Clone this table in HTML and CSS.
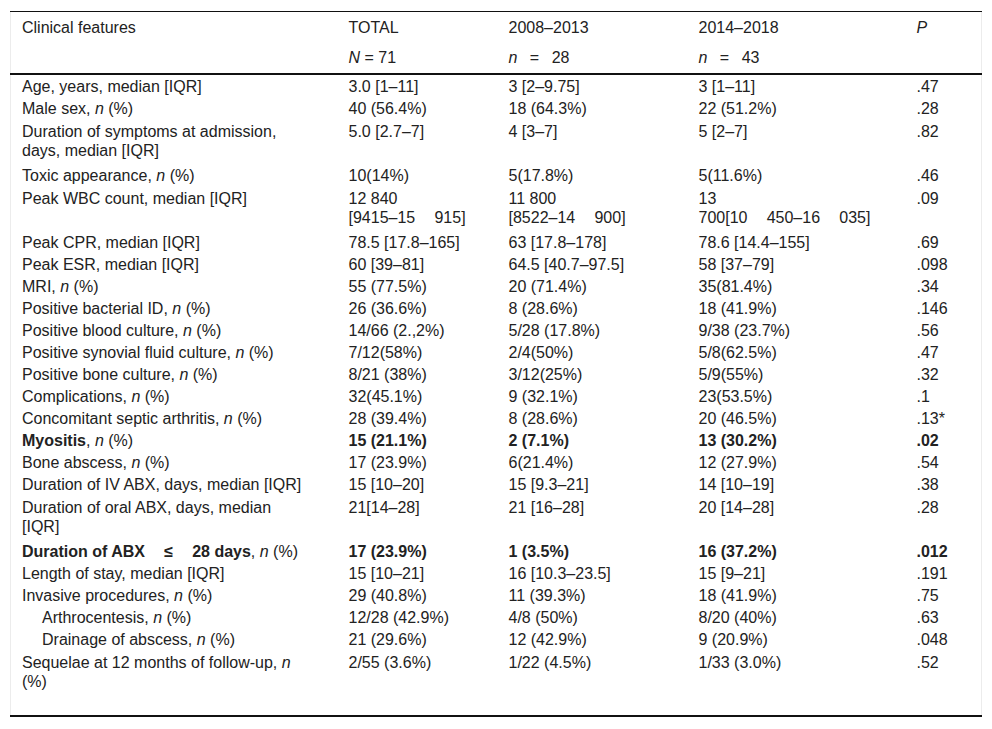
FILE: index.html
```html
<!DOCTYPE html>
<html lang="en">
<head>
<meta charset="utf-8">
<title>Clinical features table</title>
<link rel="stylesheet" href="styles.css">
</head>
<body>
<div class="wrap">
<table class="tbl">
  <colgroup>
    <col class="c1"><col class="c2"><col class="c3"><col class="c4"><col class="c5">
  </colgroup>
  <thead>
    <tr class="h1">
      <th>Clinical features</th><th>TOTAL</th><th>2008–2013</th><th>2014–2018</th><th><i>P</i></th>
    </tr>
    <tr class="h2">
      <th></th><th><i>N</i> = 71</th><th><i>n</i>&ensp;&nbsp;=&ensp;&nbsp;28</th><th><i>n</i>&ensp;&nbsp;=&ensp;&nbsp;43</th><th></th>
    </tr>
  </thead>
  <tbody>
    <tr><td>Age, years, median [IQR]</td><td>3.0 [1–11]</td><td>3 [2–9.75]</td><td>3 [1–11]</td><td>.47</td></tr>
    <tr><td>Male sex, <i>n</i> (%)</td><td>40 (56.4%)</td><td>18 (64.3%)</td><td>22 (51.2%)</td><td>.28</td></tr>
    <tr class="two"><td>Duration of symptoms at admission,<br>days, median [IQR]</td><td>5.0 [2.7–7]</td><td>4 [3–7]</td><td>5 [2–7]</td><td>.82</td></tr>
    <tr><td>Toxic appearance, <i>n</i> (%)</td><td>10(14%)</td><td>5(17.8%)</td><td>5(11.6%)</td><td>.46</td></tr>
    <tr class="two"><td>Peak WBC count, median [IQR]</td><td>12 840<br>[9415–15&emsp;&#8201;915]</td><td>11 800<br>[8522–14&emsp;&#8201;900]</td><td>13<br>700[10&emsp;&#8201;450–16&emsp;&#8201;035]</td><td>.09</td></tr>
    <tr><td>Peak CPR, median [IQR]</td><td>78.5 [17.8–165]</td><td>63 [17.8–178]</td><td>78.6 [14.4–155]</td><td>.69</td></tr>
    <tr><td>Peak ESR, median [IQR]</td><td>60 [39–81]</td><td>64.5 [40.7–97.5]</td><td>58 [37–79]</td><td>.098</td></tr>
    <tr><td>MRI, <i>n</i> (%)</td><td>55 (77.5%)</td><td>20 (71.4%)</td><td>35(81.4%)</td><td>.34</td></tr>
    <tr><td>Positive bacterial ID, <i>n</i> (%)</td><td>26 (36.6%)</td><td>8 (28.6%)</td><td>18 (41.9%)</td><td>.146</td></tr>
    <tr><td>Positive blood culture, <i>n</i> (%)</td><td>14/66 (2.,2%)</td><td>5/28 (17.8%)</td><td>9/38 (23.7%)</td><td>.56</td></tr>
    <tr><td>Positive synovial fluid culture, <i>n</i> (%)</td><td>7/12(58%)</td><td>2/4(50%)</td><td>5/8(62.5%)</td><td>.47</td></tr>
    <tr><td>Positive bone culture, <i>n</i> (%)</td><td>8/21 (38%)</td><td>3/12(25%)</td><td>5/9(55%)</td><td>.32</td></tr>
    <tr><td>Complications, <i>n</i> (%)</td><td>32(45.1%)</td><td>9 (32.1%)</td><td>23(53.5%)</td><td>.1</td></tr>
    <tr><td>Concomitant septic arthritis, <i>n</i> (%)</td><td>28 (39.4%)</td><td>8 (28.6%)</td><td>20 (46.5%)</td><td>.13*</td></tr>
    <tr><td><b>Myositis</b>, <i>n</i> (%)</td><td><b>15 (21.1%)</b></td><td><b>2 (7.1%)</b></td><td><b>13 (30.2%)</b></td><td><b>.02</b></td></tr>
    <tr><td>Bone abscess, <i>n</i> (%)</td><td>17 (23.9%)</td><td>6(21.4%)</td><td>12 (27.9%)</td><td>.54</td></tr>
    <tr><td>Duration of IV ABX, days, median [IQR]</td><td>15 [10–20]</td><td>15 [9.3–21]</td><td>14 [10–19]</td><td>.38</td></tr>
    <tr class="two"><td>Duration of oral ABX, days, median<br>[IQR]</td><td>21[14–28]</td><td>21 [16–28]</td><td>20 [14–28]</td><td>.28</td></tr>
    <tr><td><b>Duration of ABX&emsp;&#8201;≤&emsp;&#8201;28 days</b>, <i>n</i> (%)</td><td><b>17 (23.9%)</b></td><td><b>1 (3.5%)</b></td><td><b>16 (37.2%)</b></td><td><b>.012</b></td></tr>
    <tr><td>Length of stay, median [IQR]</td><td>15 [10–21]</td><td>16 [10.3–23.5]</td><td>15 [9–21]</td><td>.191</td></tr>
    <tr><td>Invasive procedures, <i>n</i> (%)</td><td>29 (40.8%)</td><td>11 (39.3%)</td><td>18 (41.9%)</td><td>.75</td></tr>
    <tr><td class="sub">Arthrocentesis, <i>n</i> (%)</td><td>12/28 (42.9%)</td><td>4/8 (50%)</td><td>8/20 (40%)</td><td>.63</td></tr>
    <tr><td class="sub">Drainage of abscess, <i>n</i> (%)</td><td>21 (29.6%)</td><td>12 (42.9%)</td><td>9 (20.9%)</td><td>.048</td></tr>
    <tr class="two last"><td>Sequelae at 12 months of follow-up, <i>n</i><br>(%)</td><td>2/55 (3.6%)</td><td>1/22 (4.5%)</td><td>1/33 (3.0%)</td><td>.52</td></tr>
  </tbody>
</table>
</div>
</body>
</html>
```

FILE: styles.css
```css
html, body {
  margin: 0;
  padding: 0;
  background: #fff;
}

.wrap {
  padding: 11px 0 0 10px;
}

.tbl {
  width: 971px;
  border-collapse: collapse;
  table-layout: fixed;
  font-family: "Liberation Sans", Arial, sans-serif;
  font-size: 16px;
  color: #222;
  border-left: 1px solid #ececec;
  border-right: 1px solid #ececec;
  border-bottom: 2px solid #111;
}

.c1 { width: 327px; }
.c2 { width: 160px; }
.c3 { width: 190px; }
.c4 { width: 218px; }
.c5 { width: 76px; }

.tbl th {
  font-weight: normal;
  text-align: left;
  vertical-align: top;
  padding: 5px 11px 4px 11px;
  line-height: 22px;
  white-space: nowrap;
}

.tbl thead tr.h1 th {
  border-top: 1px solid #111;
}

.tbl thead tr.h2 th {
  padding-top: 4px;
  padding-bottom: 4px;
  border-bottom: 2px solid #111;
}

.tbl td {
  text-align: left;
  vertical-align: top;
  padding: 0 11px;
  line-height: 22px;
  white-space: nowrap;
}

.tbl tbody tr:first-child td {
  padding-top: 1px;
}

.tbl tr.two td {
  line-height: 19px;
  padding-top: 2px;
  padding-bottom: 5px;
}

.tbl td.sub {
  padding-left: 31px;
}

.tbl tr.last td {
  padding-bottom: 24px;
}
```
